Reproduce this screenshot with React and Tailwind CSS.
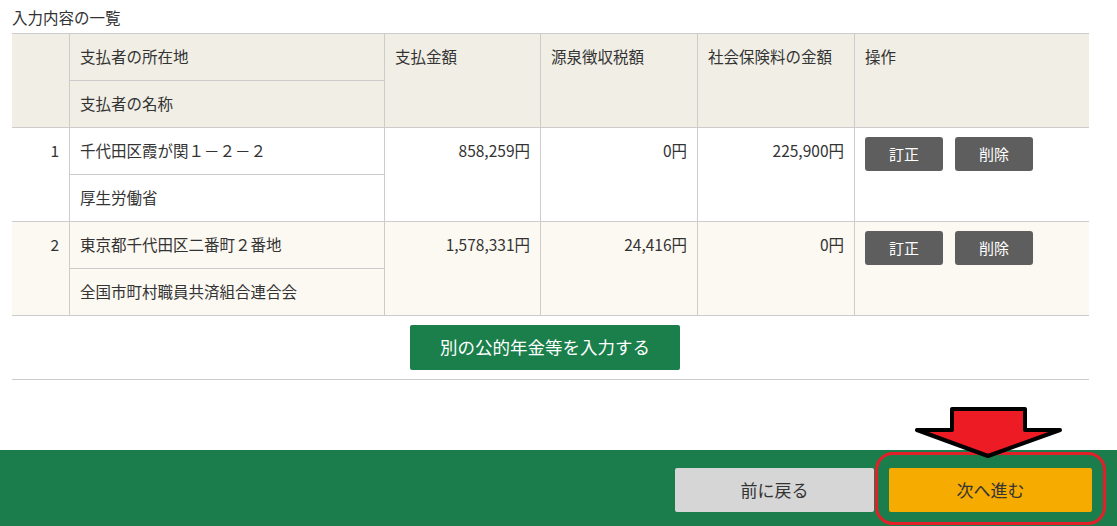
import React from 'react'

const rows = [
  {
    no: '1',
    address: '千代田区霞が関１－２－２',
    name: '厚生労働省',
    paid: '858,259円',
    withheld: '0円',
    insurance: '225,900円',
    bg: 'bg-white',
  },
  {
    no: '2',
    address: '東京都千代田区二番町２番地',
    name: '全国市町村職員共済組合連合会',
    paid: '1,578,331円',
    withheld: '24,416円',
    insurance: '0円',
    bg: 'bg-[#fcf9f2]',
  },
]

function Arrow() {
  return (
    <svg className="absolute left-[912px] top-[404px]" width="155" height="58" viewBox="0 0 155 58">
      <polygon
        points="40,5 113,5 113,26 148,26 76,52 5,26 40,26"
        fill="#ed1c24"
        stroke="#000"
        strokeWidth="4"
        strokeLinejoin="round"
      />
    </svg>
  )
}

export default function App() {
  const cell = 'border-r border-b border-[#cccccc] px-[10px]'
  const span = 'row-span-2 h-[94px] pt-[11px] leading-[23px]'
  const sub = 'h-[47px] flex items-center'

  return (
    <div
      className="relative w-[1117px] h-[526px] overflow-hidden bg-white text-[#333] text-[15.5px]"
      style={{ fontFamily: '"Noto Sans CJK JP", "Noto Sans", sans-serif' }}
    >
      <div className="ml-[12px] w-[1077px]">
        <p className="pt-[6px] leading-[22px] mb-[5px]">入力内容の一覧</p>

        <div className="grid grid-cols-[58px_315px_156px_157px_157px_234px] border-t border-[#cccccc]">
          <div className={`${cell} ${span} bg-[#f0eee5]`} />
          <div className={`${cell} ${sub} bg-[#f0eee5]`}>支払者の所在地</div>
          <div className={`${cell} ${span} bg-[#f0eee5]`}>支払金額</div>
          <div className={`${cell} ${span} bg-[#f0eee5]`}>源泉徴収税額</div>
          <div className={`${cell} ${span} bg-[#f0eee5]`}>社会保険料の金額</div>
          <div className={`border-b border-[#cccccc] px-[10px] ${span} bg-[#f0eee5]`}>操作</div>
          <div className={`${cell} ${sub} bg-[#f0eee5]`}>支払者の名称</div>

          {rows.map((r) => (
            <React.Fragment key={r.no}>
              <div className={`${cell} ${span} ${r.bg} text-right`}>{r.no}</div>
              <div className={`${cell} ${sub} ${r.bg}`}>{r.address}</div>
              <div className={`${cell} ${span} ${r.bg} text-right`}>{r.paid}</div>
              <div className={`${cell} ${span} ${r.bg} text-right`}>{r.withheld}</div>
              <div className={`${cell} ${span} ${r.bg} text-right`}>{r.insurance}</div>
              <div className={`border-b border-[#cccccc] px-[10px] row-span-2 h-[94px] pt-[9px] ${r.bg} flex items-start gap-[12px]`}>
                <button className="w-[78px] h-[34px] rounded-[3px] bg-[#5e5e5e] text-white text-[15px]">訂正</button>
                <button className="w-[78px] h-[34px] rounded-[3px] bg-[#5e5e5e] text-white text-[15px]">削除</button>
              </div>
              <div className={`${cell} ${sub} ${r.bg}`}>{r.name}</div>
            </React.Fragment>
          ))}
        </div>

        <div className="flex justify-center pr-[11px] pt-[9px] pb-[9px] border-b border-[#cccccc]">
          <button className="w-[270px] h-[45px] rounded-[2px] bg-[#1a7f4b] text-white text-[17.5px]">
            別の公的年金等を入力する
          </button>
        </div>
      </div>

      <div className="mt-[70px] bg-[#1b7d4b] h-[80px] flex justify-end items-start gap-[15px] pt-[18px] pr-[25px]">
        <button className="w-[199px] h-[44px] rounded-[2px] bg-[#d6d6d6] text-[#333] text-[17px]">前に戻る</button>
        <button className="w-[203px] h-[44px] rounded-[2px] bg-[#f5ab00] text-[#333] text-[17px]">次へ進む</button>
      </div>

      <div className="absolute left-[875px] top-[452px] w-[231px] h-[73px] border-[3px] border-[#e3202a] rounded-[18px]" />
      <Arrow />
    </div>
  )
}
